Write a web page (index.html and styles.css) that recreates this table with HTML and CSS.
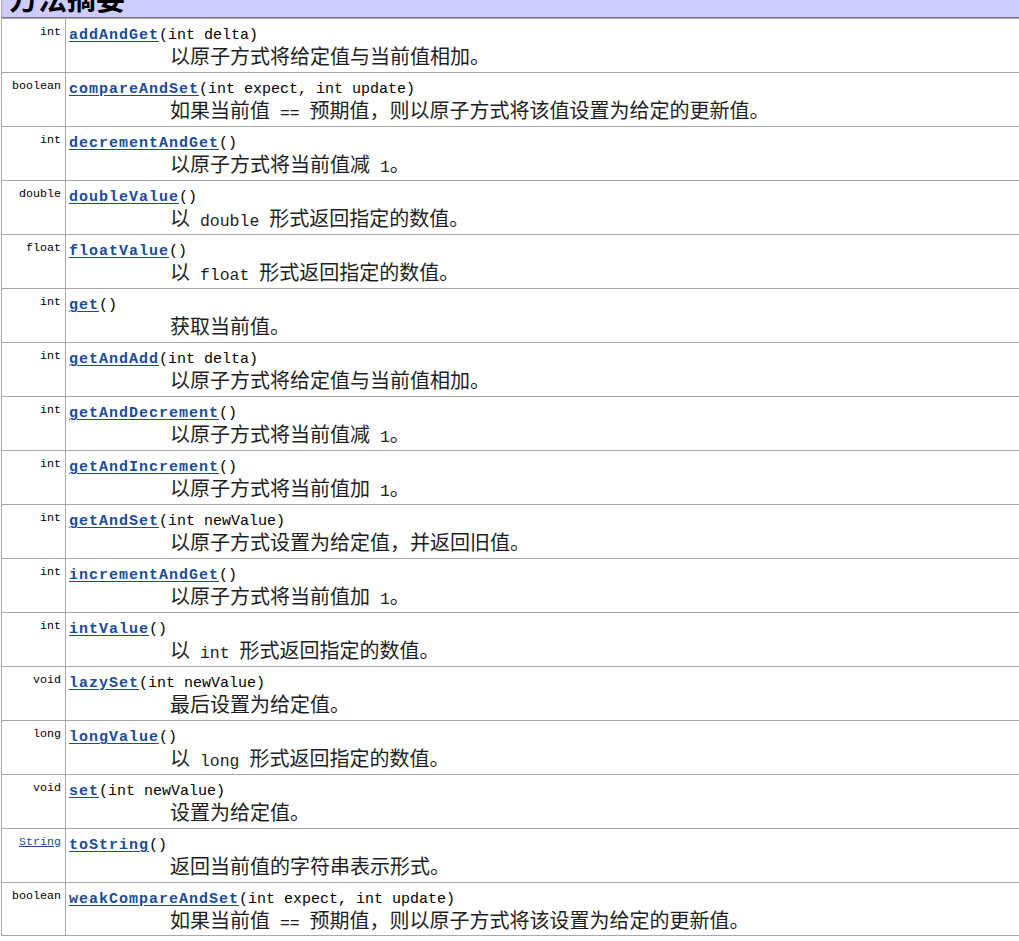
FILE: index.html
```html
<!DOCTYPE html>
<html lang="zh-CN">
<head>
<meta charset="utf-8">
<title>方法摘要</title>
<link rel="stylesheet" href="styles.css">
</head>
<body>
<div class="summary">
  <div class="head"><span class="title">方法摘要</span></div>

  <div class="row"><div class="ret">int</div><div class="meth"><div class="sig"><a class="name" href="#">addAndGet</a>(int delta)</div><div class="desc">以原子方式将给定值与当前值相加。</div></div></div>
  <div class="row"><div class="ret">boolean</div><div class="meth"><div class="sig"><a class="name" href="#">compareAndSet</a>(int expect, int update)</div><div class="desc">如果当前值<code> == </code>预期值，则以原子方式将该值设置为给定的更新值。</div></div></div>
  <div class="row"><div class="ret">int</div><div class="meth"><div class="sig"><a class="name" href="#">decrementAndGet</a>()</div><div class="desc">以原子方式将当前值减<code> 1</code>。</div></div></div>
  <div class="row"><div class="ret">double</div><div class="meth"><div class="sig"><a class="name" href="#">doubleValue</a>()</div><div class="desc">以<code> double </code>形式返回指定的数值。</div></div></div>
  <div class="row"><div class="ret">float</div><div class="meth"><div class="sig"><a class="name" href="#">floatValue</a>()</div><div class="desc">以<code> float </code>形式返回指定的数值。</div></div></div>
  <div class="row"><div class="ret">int</div><div class="meth"><div class="sig"><a class="name" href="#">get</a>()</div><div class="desc">获取当前值。</div></div></div>
  <div class="row"><div class="ret">int</div><div class="meth"><div class="sig"><a class="name" href="#">getAndAdd</a>(int delta)</div><div class="desc">以原子方式将给定值与当前值相加。</div></div></div>
  <div class="row"><div class="ret">int</div><div class="meth"><div class="sig"><a class="name" href="#">getAndDecrement</a>()</div><div class="desc">以原子方式将当前值减<code> 1</code>。</div></div></div>
  <div class="row"><div class="ret">int</div><div class="meth"><div class="sig"><a class="name" href="#">getAndIncrement</a>()</div><div class="desc">以原子方式将当前值加<code> 1</code>。</div></div></div>
  <div class="row"><div class="ret">int</div><div class="meth"><div class="sig"><a class="name" href="#">getAndSet</a>(int newValue)</div><div class="desc">以原子方式设置为给定值，并返回旧值。</div></div></div>
  <div class="row"><div class="ret">int</div><div class="meth"><div class="sig"><a class="name" href="#">incrementAndGet</a>()</div><div class="desc">以原子方式将当前值加<code> 1</code>。</div></div></div>
  <div class="row"><div class="ret">int</div><div class="meth"><div class="sig"><a class="name" href="#">intValue</a>()</div><div class="desc">以<code> int </code>形式返回指定的数值。</div></div></div>
  <div class="row"><div class="ret">void</div><div class="meth"><div class="sig"><a class="name" href="#">lazySet</a>(int newValue)</div><div class="desc">最后设置为给定值。</div></div></div>
  <div class="row"><div class="ret">long</div><div class="meth"><div class="sig"><a class="name" href="#">longValue</a>()</div><div class="desc">以<code> long </code>形式返回指定的数值。</div></div></div>
  <div class="row"><div class="ret">void</div><div class="meth"><div class="sig"><a class="name" href="#">set</a>(int newValue)</div><div class="desc">设置为给定值。</div></div></div>
  <div class="row"><div class="ret"><a class="type" href="#">String</a></div><div class="meth"><div class="sig"><a class="name" href="#">toString</a>()</div><div class="desc">返回当前值的字符串表示形式。</div></div></div>
  <div class="row"><div class="ret">boolean</div><div class="meth"><div class="sig"><a class="name" href="#">weakCompareAndSet</a>(int expect, int update)</div><div class="desc">如果当前值<code> == </code>预期值，则以原子方式将该设置为给定的更新值。</div></div></div>
</div>
</body>
</html>
```

FILE: styles.css
```css
html, body {
  margin: 0;
  padding: 0;
  background: #ffffff;
  overflow: hidden;
}

.summary {
  width: 1060px;
  margin-left: 1px;
  border-left: 1px solid #a8a8a8;
  font-family: "Liberation Mono", "Noto Sans CJK SC", monospace;
  color: #000;
}

.head {
  height: 17px;
  background: #ccccff;
  overflow: hidden;
  border-bottom: 1px solid #7c7c86;
  box-sizing: content-box;
}

.title {
  display: block;
  margin-top: -17px;
  padding-left: 7px;
  font-family: "Noto Sans CJK SC", sans-serif;
  font-weight: bold;
  font-size: 29px;
  line-height: 28px;
  color: #000;
}

.row {
  display: grid;
  grid-template-columns: 64px 1fr;
  height: 54px;
  box-sizing: border-box;
  border-top: 1px solid #a8a8a8;
  background: #ffffff;
}

.row:last-child {
  border-bottom: 1px solid #a8a8a8;
}

.ret {
  box-sizing: border-box;
  border-right: 1px solid #a8a8a8;
  text-align: right;
  padding: 6px 4px 0 0;
  font-family: "Liberation Mono", monospace;
  font-size: 11.67px;
  line-height: 14px;
  color: #000;
}

.type {
  color: #1a4b9b;
  text-decoration: underline;
}

.meth {
  padding: 7px 0 0 3px;
}

.sig {
  height: 19px;
  font-family: "Liberation Mono", monospace;
  font-size: 15px;
  line-height: 19px;
  white-space: nowrap;
}

.name {
  font-weight: bold;
  letter-spacing: 1px;
  color: #1a4b9b;
  text-decoration: underline;
  text-underline-offset: 2px;
}

.desc {
  padding-left: 101px;
  font-family: "Noto Sans CJK SC", sans-serif;
  font-size: 20px;
  line-height: 22px;
  color: #1e1e1e;
  white-space: nowrap;
}

.desc code {
  font-family: "Liberation Mono", monospace;
  font-size: 16.5px;
  line-height: 1;
  white-space: pre;
}
```
